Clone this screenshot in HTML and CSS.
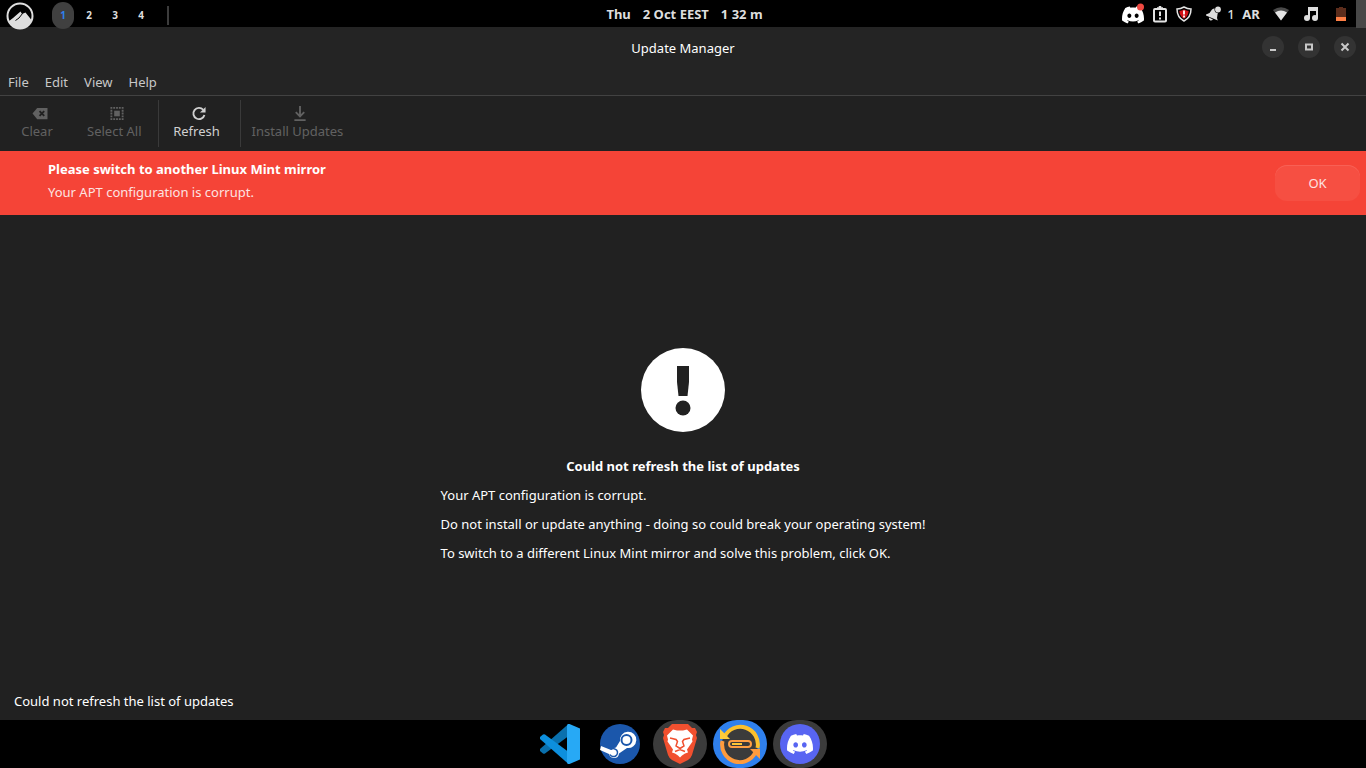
FILE: index.html
```html
<!DOCTYPE html>
<html lang="en">
<head>
    <meta charset="utf-8">
    <title>Update Manager</title>
    <link rel="stylesheet" href="styles.css">
</head>
<body>
    <!-- shared logo -->
    <svg class="defs" width="0" height="0" aria-hidden="true">
        <symbol id="discord" viewBox="0 0 24 24">
            <path d="M20.317 4.3698a19.7913 19.7913 0 00-4.8851-1.5152.0741.0741 0 00-.0785.0371c-.211.3753-.4447.8648-.6083 1.2495-1.8447-.2762-3.68-.2762-5.4868 0-.1636-.3933-.4058-.8742-.6177-1.2495a.077.077 0 00-.0785-.037 19.7363 19.7363 0 00-4.8852 1.515.0699.0699 0 00-.0321.0277C.5334 9.0458-.319 13.5799.0992 18.0578a.0824.0824 0 00.0312.0561c2.0528 1.5076 4.0413 2.4228 5.9929 3.0294a.0777.0777 0 00.0842-.0276c.4616-.6304.8731-1.2952 1.226-1.9942a.076.076 0 00-.0416-.1057c-.6528-.2476-1.2743-.5495-1.8722-.8923a.077.077 0 01-.0076-.1277c.1258-.0943.2517-.1923.3718-.2914a.0743.0743 0 01.0776-.0105c3.9278 1.7933 8.18 1.7933 12.0614 0a.0739.0739 0 01.0785.0095c.1202.099.246.1981.3728.2924a.077.077 0 01-.0066.1276 12.2986 12.2986 0 01-1.873.8914.0766.0766 0 00-.0407.1067c.3604.698.7719 1.3628 1.225 1.9932a.076.076 0 00.0842.0286c1.961-.6067 3.9495-1.5219 6.0023-3.0294a.077.077 0 00.0313-.0552c.5004-5.177-.8382-9.6739-3.5485-13.6604a.061.061 0 00-.0312-.0286zM8.02 15.3312c-1.1825 0-2.1569-1.0857-2.1569-2.419 0-1.3332.9555-2.4189 2.157-2.4189 1.2108 0 2.1757 1.0952 2.1568 2.419 0 1.3332-.9555 2.4189-2.1569 2.4189zm7.9748 0c-1.1825 0-2.1569-1.0857-2.1569-2.419 0-1.3332.9554-2.4189 2.1569-2.4189 1.2108 0 2.1757 1.0952 2.1568 2.419 0 1.3332-.946 2.4189-2.1568 2.4189z"/>
        </symbol>
    </svg>

    <!-- Top panel -->
    <header class="panel">
        <div class="panel_left">
            <button class="menu_btn" aria-label="Menu">
                <svg width="28" height="28" viewBox="0 0 28 28">
                    <circle cx="14" cy="14" r="12.5" fill="#000" stroke="#dedede" stroke-width="2"/>
                    <path d="M2.500 19.500L7 16l7.500-6.500 1.500 2.500 3.500-1.500L25.500 18A12 12 0 0 1 3 20z" fill="#dedede"/>
                    <path d="M9.500 18.500l3.500-2.500L16.500 11.500" stroke="#000" stroke-width="1" fill="none"/>
                </svg>
            </button>
            <nav class="workspaces">
                <button class="active">1</button>
                <button>2</button>
                <button>3</button>
                <button>4</button>
            </nav>
            <span class="panel_sep"></span>
        </div>

        <div class="clock">
            <span>Thu</span>
            <span>2 Oct EEST</span>
            <span>1 32 m</span>
        </div>

        <div class="tray">
            <button class="tray_item" aria-label="Discord">
                <svg width="24" height="24" viewBox="0 0 24 24">
                    <use href="#discord" x="1" y="2" width="22" height="22" fill="#fff"/>
                    <circle cx="19.5" cy="5" r="3.500" fill="#f04a42"/>
                </svg>
            </button>
            <button class="tray_item narrow" aria-label="Clipboard">
                <svg width="16" height="18" viewBox="0 0 16 18" fill="none" stroke="#e4e4e4">
                    <rect x="2" y="4" width="12" height="12.500" rx="1" stroke-width="2"/>
                    <path d="M5 3.500h6M8 1v3" stroke-width="2.500"/>
                    <path d="M8 6.500v4.500M8 12.500v2" stroke-width="2"/>
                </svg>
            </button>
            <button class="tray_item narrow" aria-label="Updates">
                <svg width="16" height="18" viewBox="0 0 16 18">
                    <path d="M8 2Q11.500 4 15 4Q15 12.500 8 16Q1 12.500 1 4Q4.500 4 8 2z" fill="#000" stroke="#e4e4e4" stroke-width="1.500"/>
                    <path d="M8 4.500Q10.500 5.800 12.700 6Q12 11.500 8 13.700Q4 11.500 3.300 6Q5.500 5.800 8 4.500z" fill="#d40f14"/>
                    <path d="M8 5.500v4M8 10.500v2" stroke="#fff" stroke-width="1.800"/>
                </svg>
            </button>
            <button class="tray_item bell" aria-label="Notifications">
                <svg width="16" height="16" viewBox="0 0 16 16" fill="#dedede">
                    <path d="M1 8.500L4.500 7 7 3.500q2.500-2 4.500 0 2 1.500 1 5l-.5 3.500.8 2.500L1 9.500z"/>
                    <path d="M4 11.500l4 2q-1.500 1.500-3 .8-1.500-.8-1-2.800z"/>
                    <circle cx="13" cy="3.500" r="3.500" fill="#000"/>
                    <circle cx="13" cy="3.500" r="2.900"/>
                </svg>
            </button>
            <span class="count">1</span>
            <button class="tray_item" aria-label="Keyboard layout AR">AR</button>
            <button class="tray_item" aria-label="Network">
                <svg width="16" height="14" viewBox="0 0 16 14">
                    <path d="M0 3Q8-2.500 16 3L8 13.500z" fill="#4a4a4a"/>
                    <path d="M2 5.500Q8 1.500 14 5.500L8 13.500z" fill="#e4e4e4"/>
                </svg>
            </button>
            <button class="tray_item" aria-label="Sound">
                <svg width="14" height="14" viewBox="0 0 14 14" fill="#dedede">
                    <path d="M4 0h10v11h-2V4H6v7H4z"/>
                    <circle cx="3" cy="11" r="3"/>
                    <circle cx="11" cy="11" r="3"/>
                </svg>
            </button>
            <button class="tray_item" aria-label="Battery">
                <svg width="10" height="14" viewBox="0 0 10 14">
                    <path d="M3 0h4v1h3v9H0V1h3z" fill="#5c2d1c"/>
                    <path d="M0 10h10v4H0z" fill="#ff7f45"/>
                </svg>
            </button>
            <button class="show_desktop" aria-label="Show desktop"></button>
        </div>
    </header>

    <!-- Update Manager window -->
    <main class="window">
        <div class="titlebar">
            <h1>Update Manager</h1>
            <div class="window_btns">
                <button aria-label="Minimize">
                    <svg width="22" height="22" viewBox="0 0 22 22"><path d="M8 13h6v2H8z" fill="#c8c8c8"/></svg>
                </button>
                <button aria-label="Maximize">
                    <svg width="22" height="22" viewBox="0 0 22 22"><path d="M8 8.500h6v5H8z" fill="none" stroke="#c8c8c8" stroke-width="2"/></svg>
                </button>
                <button aria-label="Close">
                    <svg width="22" height="22" viewBox="0 0 22 22"><path d="M7.500 7.500l7 7M14.500 7.500l-7 7" stroke="#c8c8c8" stroke-width="2"/></svg>
                </button>
            </div>
        </div>

        <nav class="menubar">
            <button>File</button>
            <button>Edit</button>
            <button>View</button>
            <button>Help</button>
        </nav>

        <div class="toolbar">
            <button disabled>
                <svg width="16" height="16" viewBox="0 0 16 16">
                    <path d="M5 2h11v12H5L0 8z" fill="currentColor"/>
                    <path d="M7.500 5.500l5 5M12.500 5.500l-5 5" stroke="#212121" stroke-width="2"/>
                </svg>
                Clear
            </button>
            <button disabled>
                <svg width="16" height="16" viewBox="0 0 16 16" fill="currentColor">
                    <path d="M5 5h6v6H5z"/>
                    <path d="M1 2h14M1 14h14" stroke="currentColor" stroke-width="2" stroke-dasharray="2 1"/>
                    <path d="M2 4v9M14 4v9" stroke="currentColor" stroke-width="2" stroke-dasharray="2 1"/>
                </svg>
                Select All
            </button>
            <span class="toolbar_sep"></span>
            <button>
                <svg width="16" height="16" viewBox="0 0 16 16">
                    <path d="M12.500 4A6 6 0 1 0 13.800 9.500" fill="none" stroke="currentColor" stroke-width="2"/>
                    <path d="M15 1v6H9z" fill="currentColor"/>
                </svg>
                Refresh
            </button>
            <span class="toolbar_sep"></span>
            <button disabled>
                <svg width="16" height="16" viewBox="0 0 16 16" fill="none" stroke="currentColor" stroke-width="2">
                    <path d="M8 0v11M3.500 6.500L8 11l4.500-4.500M2 15h12"/>
                </svg>
                Install Updates
            </button>
        </div>

        <div class="infobar">
            <div class="infobar_text">
                <strong>Please switch to another Linux Mint mirror</strong>
                <span>Your APT configuration is corrupt.</span>
            </div>
            <button>OK</button>
        </div>

        <section class="error">
            <svg width="84" height="84" viewBox="0 0 84 84">
                <circle cx="42" cy="42" r="42" fill="#fff"/>
                <path d="M36 18h12v16l-1.500 14h-9L36 34z" fill="#212121"/>
                <circle cx="42" cy="60" r="7.500" fill="#212121"/>
            </svg>
            <h2>Could not refresh the list of updates</h2>
            <div class="error_text">
                <p>Your APT configuration is corrupt.</p>
                <p>Do not install or update anything - doing so could break your operating system!</p>
                <p>To switch to a different Linux Mint mirror and solve this problem, click OK.</p>
            </div>
        </section>

        <footer class="statusbar">Could not refresh the list of updates</footer>
    </main>

    <!-- Dock -->
    <nav class="dock">
        <button aria-label="Visual Studio Code">
            <svg width="40" height="40" viewBox="0 0 40 40">
                <path d="M0 27q-.5-1 0-2L28.500 0 30 11 5 29.500q-1 .5-2 0z" fill="#0a70ad"/>
                <path d="M0 13q-.5 1 0 2L28.500 40 30 29 5 10.500q-1-.5-2 0z" fill="#0d8fdd"/>
                <path d="M28 0h1.500L40 4.500v31L29.500 40H28q-1-.5-1-2V2q0-1.500 1-2z" fill="#27a9f5"/>
            </svg>
        </button>
        <button aria-label="Steam">
            <svg width="40" height="40" viewBox="0 0 40 40">
                <circle cx="20" cy="20" r="20" fill="#1b57ab"/>
                <path d="M1 22L11 26q2-2.500 5-2.500L20 17A8.200 8.200 0 1 1 27 24l-8 5.500q-.5 4.500-5 4.500-4 0-5-4L0 26z" fill="#fff"/>
                <circle cx="26.500" cy="16" r="5" fill="#fff" stroke="#1b57ab" stroke-width="2"/>
                <path d="M11 25.500a4 4 0 1 1-1 5" fill="none" stroke="#1b57ab" stroke-width="1.500"/>
            </svg>
        </button>
        <button class="running" aria-label="Brave">
            <svg width="40" height="40" viewBox="0 0 40 40">
                <path d="M12 0h16l4 4 3 0 2 4-1 3 1 3-5 17q-1 3-4 5l-8 4-8-4q-3-2-4-5L3 14l1-3-1-3 2-4 3 0z" fill="#f1502f"/>
                <path d="M13 5.500l4 1h6l4-1 6 6-1 4 .5 2-5.500 8 1 3-3 1-3 2-2 2-2-2-3-2-3-1 1-3-5.500-8 .5-2-1-4z" fill="#fff"/>
                <path d="M10 14l6 1.500 1.500 2-1.500 4.500 4 2.500 4-2.500-1.500-4.500 1.500-2 6-1.500M20 24v2M15 27.500l5-2 5 2" fill="none" stroke="#f1502f" stroke-width="1.500"/>
            </svg>
        </button>
        <button class="running focused" aria-label="Update Manager">
            <svg width="40" height="40" viewBox="0 0 40 40">
                <circle cx="20" cy="20" r="18" fill="#3b3b3b"/>
                <path d="M4.500 13A17.500 17.500 0 0 1 37.500 24" fill="none" stroke="#fbc02d" stroke-width="4"/>
                <path d="M2.500 17A17.500 17.500 0 0 0 35.500 28" fill="none" stroke="#ff9b3d" stroke-width="4"/>
                <path d="M0 5v10h10z" fill="#ffcb3b"/>
                <path d="M40 25v10L30 25z" fill="#ff9b3d"/>
                <rect x="9" y="17" width="22" height="6" rx="3" fill="#3b3b3b" stroke="#ff9f43" stroke-width="2"/>
                <path d="M12 20h10" stroke="#ffc736" stroke-width="2"/>
            </svg>
        </button>
        <button class="running" aria-label="Discord">
            <svg width="40" height="40" viewBox="0 0 40 40">
                <circle cx="20" cy="20" r="20" fill="#5865f2"/>
                <use href="#discord" x="7" y="7" width="26" height="26" fill="#fff"/>
            </svg>
        </button>
    </nav>
</body>
</html>
```
FILE: styles.css
```css
* {box-sizing: border-box}
body {
    margin: 0;
    height: 100vh;
    display: flex;
    flex-direction: column;
    background: #000;
    color: #fff;
    font: 13px/20px "Noto Sans", sans-serif;
}
button {
    padding: 0;
    border: 0;
    background: none;
    color: inherit;
    font: inherit;
}
svg {display: block}
h1, h2, p {margin: 0}
.defs {position: absolute}

/* Top panel, the left buttons hang a little over the window */
.panel {
    position: relative;
    display: grid;
    grid-template-columns: 1fr auto 1fr;
    height: 27px;
    color: #dedede;
    font-weight: bold;
}
.panel_left, .clock, .tray {
    display: flex;
    align-items: center;
    height: 28px;
}
.panel_left {
    height: 31px;
    padding-left: 6px;
}
.workspaces {
    display: flex;
    gap: 4px;
    margin-left: 18px;
}
.workspaces button {
    width: 22px;
    height: 27px;
    padding-bottom: 2px;
    border-radius: 11px;
    font-size: 10px;
}
.workspaces .active {
    background: #404040;
    color: #2f80ed;
}
.panel_sep {
    width: 2px;
    height: 19px;
    margin-left: 15px;
    background: #3c3c3c;
}
.clock {
    gap: 12px;
    padding-left: 3px;
}
.tray {justify-content: flex-end}
.tray_item {
    display: flex;
    justify-content: center;
    width: 30px;
}
.tray_item.narrow {width: 24px}
.tray_item.bell {padding-left: 4px}
.count {
    width: 10px;
    text-align: center;
    font-weight: 500;
}
.show_desktop {
    width: 10px;
    height: 28px;
    background: #484848;
}

/* Window */
.window {
    flex: 1;
    display: flex;
    flex-direction: column;
    background: #212121;
}
.titlebar {
    display: grid;
    grid-template-columns: 1fr auto 1fr;
    align-items: center;
    height: 41px;
    padding: 0 10px;
    background: #242424;
}
.titlebar h1 {
    grid-column: 2;
    font-size: 13px;
    font-weight: normal;
}
.window_btns {
    display: flex;
    justify-content: flex-end;
    gap: 14px;
    padding-bottom: 2px;
}
.window_btns button {
    border-radius: 50%;
    background: #333;
}
.menubar {
    display: flex;
    height: 28px;
    border-bottom: 1px solid #424242;
    background: #242424;
    color: #c8c8c8;
}
.menubar button {padding: 0 8px}

/* Toolbar */
.toolbar {
    display: flex;
    height: 55px;
    padding: 4px 0;
}
.toolbar button {
    display: flex;
    flex-direction: column;
    align-items: center;
    min-width: 74px;
    margin-right: 3px;
    padding: 6px 10px;
    color: #d0d0d0;
    line-height: 20px;
}
.toolbar svg {margin-left: 6px}
.toolbar button:disabled {color: #616161}
.toolbar_sep {
    width: 1px;
    margin-left: 4px;
    background: #3a3a3a;
}

/* Error banner */
.infobar {
    display: flex;
    align-items: center;
    justify-content: space-between;
    height: 64px;
    padding: 0 6px 0 48px;
    background: #f54437;
}
.infobar_text {
    display: flex;
    flex-direction: column;
    gap: 3px;
    padding-bottom: 6px;
}
.infobar_text span {color: #fde3e1}
.infobar button {
    width: 85px;
    height: 36px;
    border-radius: 12px;
    background: #f64f42;
    box-shadow: inset 0 1px #f86055;
    color: #fde3e1;
}

/* Message */
.error {
    flex: 1;
    display: flex;
    flex-direction: column;
    align-items: center;
    justify-content: center;
    gap: 9px;
    padding-top: 14px;
}
.error svg {margin-bottom: 15px}
.error h2 {
    font-size: 13px;
    line-height: 20px;
}
.error_text {
    display: flex;
    flex-direction: column;
    gap: 9px;
}
.statusbar {padding: 9px 14px}

/* Dock */
.dock {
    display: flex;
    justify-content: center;
    gap: 6px;
    height: 48px;
    padding-right: 6px;
}
.dock button {
    display: flex;
    align-items: center;
    justify-content: center;
    width: 54px;
    border-radius: 24px;
}
.dock .running {background: #3b3b3b}
.dock .focused {background: #2f80ed}
```
